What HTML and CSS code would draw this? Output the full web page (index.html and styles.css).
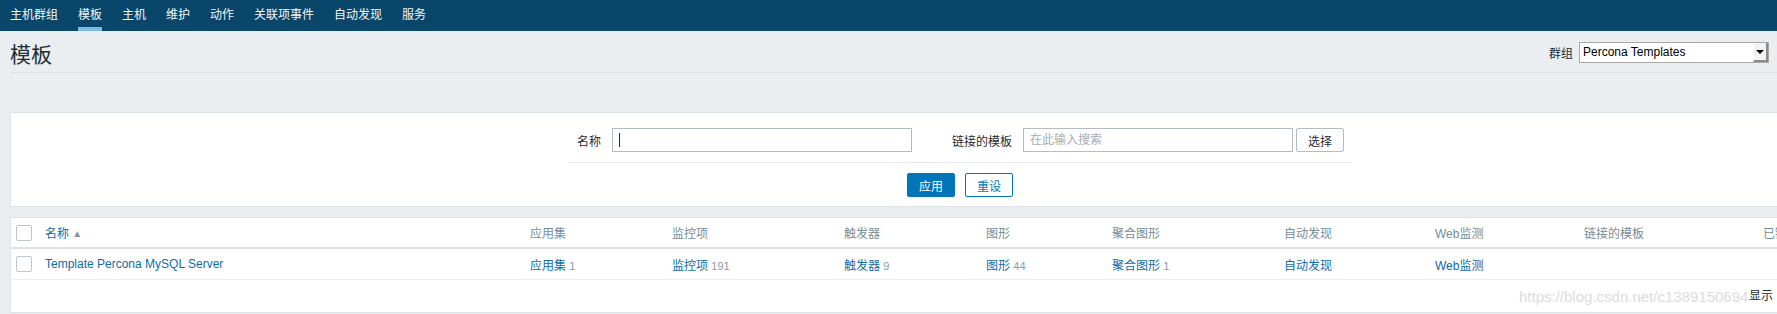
FILE: index.html
```html
<!DOCTYPE html>
<html lang="zh-CN">
<head>
    <meta charset="UTF-8">
    <title>模板</title>
    <link rel="stylesheet" href="styles.css">
</head>
<body>
    <!-- Top menu -->
    <div class="top-nav">
        <a href="#"><span>主机群组</span></a>
        <a href="#" class="selected"><span>模板</span></a>
        <a href="#"><span>主机</span></a>
        <a href="#"><span>维护</span></a>
        <a href="#"><span>动作</span></a>
        <a href="#"><span>关联项事件</span></a>
        <a href="#"><span>自动发现</span></a>
        <a href="#"><span>服务</span></a>
    </div>

    <div class="header-title">
        <h1>模板</h1>
        <div class="group-select">
            <span class="group-label">群组</span>
            <div class="select-box">
                <span class="select-text">Percona Templates</span>
                <span class="select-btn"><span class="select-arrow"></span></span>
            </div>
        </div>
    </div>

    <div class="page-body">
        <!-- Filter -->
        <div class="filter-box">
            <div class="filter-row">
                <div class="filter-cell first">
                    <label>名称</label>
                    <div class="text-input name-input"><span class="caret"></span></div>
                </div>
                <div class="filter-cell second">
                    <label>链接的模板</label>
                    <div class="text-input search-input">在此输入搜索</div>
                    <button class="btn-alt select-btn2">选择</button>
                </div>
            </div>
            <div class="filter-buttons">
                <button class="btn-main">应用</button>
                <button class="btn-alt">重设</button>
            </div>
        </div>

        <!-- List -->
        <div class="list-box">
            <table class="list-table">
                <colgroup>
                    <col style="width: 29px">
                    <col style="width: 485px">
                    <col style="width: 142px">
                    <col style="width: 172px">
                    <col style="width: 142px">
                    <col style="width: 126px">
                    <col style="width: 172px">
                    <col style="width: 151px">
                    <col style="width: 149px">
                    <col style="width: 179px">
                    <col>
                </colgroup>
                <thead>
                    <tr>
                        <th><span class="checkbox"></span></th>
                        <th><a href="#" class="link">名称</a> <span class="sort-up">▲</span></th>
                        <th>应用集</th>
                        <th>监控项</th>
                        <th>触发器</th>
                        <th>图形</th>
                        <th>聚合图形</th>
                        <th>自动发现</th>
                        <th>Web监测</th>
                        <th>链接的模板</th>
                        <th>已链接到</th>
                    </tr>
                </thead>
                <tbody>
                    <tr>
                        <td><span class="checkbox"></span></td>
                        <td><a href="#" class="link">Template Percona MySQL Server</a></td>
                        <td><a href="#" class="link">应用集</a> <sup class="count">1</sup></td>
                        <td><a href="#" class="link">监控项</a> <sup class="count">191</sup></td>
                        <td><a href="#" class="link">触发器</a> <sup class="count">9</sup></td>
                        <td><a href="#" class="link">图形</a> <sup class="count">44</sup></td>
                        <td><a href="#" class="link">聚合图形</a> <sup class="count">1</sup></td>
                        <td><a href="#" class="link">自动发现</a></td>
                        <td><a href="#" class="link">Web监测</a></td>
                        <td></td>
                        <td></td>
                    </tr>
                </tbody>
            </table>
            <div class="table-stats">显示 已自动发现的 1中的1</div>
            <div class="watermark">https://blog.csdn.net/c1389150694</div>
        </div>
    </div>
</body>
</html>
```

FILE: styles.css
```css
/* Zabbix-like templates page, blue theme */
body {
    margin: 0;
    font-family: "Liberation Sans", Arial, "Noto Sans CJK SC", sans-serif;
    font-size: 12px;
    color: #1f2c33;
    background: #ebeef0;
    overflow: hidden;
}
a {
    text-decoration: none;
}
.top-nav {
    display: flex;
    height: 31px;
    background: #0a466a;
}
.top-nav a {
    padding: 0 10px;
    line-height: 31px;
    color: #f2f6f8;
}
.top-nav a span {
    display: inline-block;
    height: 31px;
}
.top-nav a.selected span {
    box-shadow: inset 0 -4px 0 #7fb8e0;
}
.header-title {
    display: flex;
    justify-content: space-between;
    height: 41px;
    margin: 0 0 0 10px;
    padding-right: 8px;
    border-bottom: 1px solid #dde3e6;
}
.header-title h1 {
    margin: 12px 0 0 0;
    font-size: 21px;
    font-weight: normal;
    line-height: 24px;
    color: #1f2c33;
}
.group-select {
    display: flex;
    align-items: center;
    height: 21px;
    margin-top: 11px;
}
.group-label {
    margin-right: 6px;
}
.select-box {
    display: flex;
    width: 188px;
    height: 19px;
    border: 1px solid #a9a9a9;
    background: white;
}
.select-text {
    flex: 1;
    padding-left: 3px;
    line-height: 19px;
    font-size: 12px;
    color: #000;
}
.select-btn {
    display: flex;
    align-items: center;
    justify-content: center;
    width: 15px;
    background: #f3f3f3;
    border-left: 1px solid #fff;
    border-right: 2px solid #8a8a8a;
    border-bottom: 2px solid #8a8a8a;
    box-sizing: border-box;
}
.select-arrow {
    width: 0;
    height: 0;
    border-left: 4px solid transparent;
    border-right: 4px solid transparent;
    border-top: 4px solid #000;
}
.page-body {
    width: 1900px;
    margin: 39px 0 0 10px;
}
.filter-box {
    background: white;
    border: 1px solid #dde3e6;
}
.filter-row {
    display: flex;
    width: 784px;
    margin: 0 auto;
    padding: 15px 0 10px 0;
    border-bottom: 1px solid #e6eaec;
}
.filter-cell {
    display: flex;
    align-items: center;
}
.filter-cell.first {
    padding-left: 9px;
}
.filter-cell.second {
    margin-left: 40px;
}
.filter-cell label {
    margin-right: 11px;
    white-space: nowrap;
}
.text-input {
    box-sizing: border-box;
    height: 24px;
    border: 1px solid #b2bcc2;
    background: white;
    padding: 0 6px;
    line-height: 22px;
    color: #a4adb3;
}
.name-input {
    width: 300px;
    display: flex;
    align-items: center;
}
.caret {
    width: 1px;
    height: 14px;
    background: #1f2c33;
}
.search-input {
    width: 270px;
}
.select-btn2 {
    margin-left: 3px;
    border-color: #b2bcc2 !important;
    color: #1f2c33 !important;
}
.filter-buttons {
    display: flex;
    justify-content: center;
    gap: 10px;
    padding: 10px 0 9px 0;
}
button {
    font-family: inherit;
    font-size: 12px;
    width: 48px;
    height: 24px;
    border-radius: 2px;
    cursor: pointer;
}
.btn-main {
    background: #0275b8;
    border: 1px solid #0275b8;
    color: white;
}
.btn-alt {
    background: white;
    border: 1px solid #0275b8;
    color: #0275b8;
}
.list-box {
    position: relative;
    margin-top: 10px;
    background: white;
    border: 1px solid #dde3e6;
    height: 94px;
}
.list-table {
    width: 100%;
    table-layout: fixed;
    border-collapse: collapse;
}
.list-table th {
    height: 29px;
    padding: 0 5px;
    text-align: left;
    font-weight: normal;
    color: #768d99;
    border-bottom: 2px solid #dde3e6;
    white-space: nowrap;
}
.list-table td {
    height: 30px;
    padding: 0 5px;
    border-bottom: 1px solid #ebeef0;
    white-space: nowrap;
}
.checkbox {
    display: block;
    width: 14px;
    height: 14px;
    border: 1px solid #bcc6cc;
    border-radius: 2px;
    background: white;
}
.link {
    color: #0f6ca8;
}
.sort-up {
    font-size: 10px;
    color: #8a969d;
    vertical-align: 1px;
}
.count {
    vertical-align: baseline;
    font-size: 11px;
    color: #8a9aa3;
}
.table-stats {
    text-align: right;
    padding: 10px 20px 0 0;
    line-height: 13px;
}
.watermark {
    position: absolute;
    left: 1508px;
    top: 70px;
    font-size: 15px;
    color: #dcdcdc;
}
```
